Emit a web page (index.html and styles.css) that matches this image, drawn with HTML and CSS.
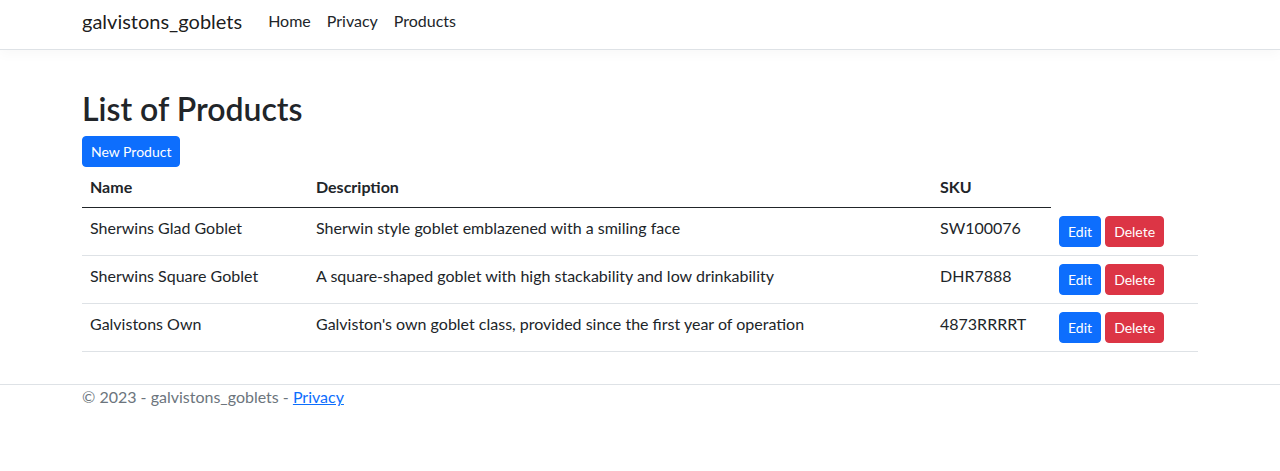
FILE: index.html
```html
<!DOCTYPE html>
<html lang="en">
<head>
<meta charset="utf-8">
<title>List of Products - galvistons_goblets</title>
<link rel="stylesheet" href="styles.css">
</head>
<body>
<header class="navbar">
  <div class="container nav-inner">
    <a class="brand" href="#">galvistons_goblets</a>
    <nav class="nav-links">
      <a class="nav-link" href="#">Home</a>
      <a class="nav-link" href="#">Privacy</a>
      <a class="nav-link" href="#">Products</a>
    </nav>
  </div>
</header>
<main class="container main">
  <h1 class="title">List of Products</h1>
  <div class="actions-top"><a class="btn btn-primary" href="#">New Product</a></div>
  <table class="table">
    <colgroup>
      <col class="c-name"><col class="c-desc"><col class="c-sku"><col class="c-act">
    </colgroup>
    <thead>
      <tr><th>Name</th><th>Description</th><th>SKU</th></tr>
    </thead>
    <tbody>
      <tr>
        <td>Sherwins Glad Goblet</td>
        <td>Sherwin style goblet emblazened with a smiling face</td>
        <td>SW100076</td>
        <td><a class="btn btn-primary" href="#">Edit</a> <a class="btn btn-danger" href="#">Delete</a></td>
      </tr>
      <tr>
        <td>Sherwins Square Goblet</td>
        <td>A square-shaped goblet with high stackability and low drinkability</td>
        <td>DHR7888</td>
        <td><a class="btn btn-primary" href="#">Edit</a> <a class="btn btn-danger" href="#">Delete</a></td>
      </tr>
      <tr>
        <td>Galvistons Own</td>
        <td>Galviston's own goblet class, provided since the first year of operation</td>
        <td>4873RRRRT</td>
        <td><a class="btn btn-primary" href="#">Edit</a> <a class="btn btn-danger" href="#">Delete</a></td>
      </tr>
    </tbody>
  </table>
</main>
<footer class="footer">
  <div class="container">&copy; 2023 - galvistons_goblets - <a href="#" class="footer-link">Privacy</a></div>
</footer>
</body>
</html>
```
FILE: styles.css
```css
* { box-sizing: border-box; }
html, body { margin: 0; padding: 0; }
body {
  font-family: "Lato", "Noto Sans", sans-serif;
  font-size: 16px;
  line-height: 1.5;
  color: #212529;
  background: #fff;
}
.container {
  max-width: 1140px;
  margin: 0 auto;
  padding: 0 12px;
}
.navbar {
  height: 50px;
  border-bottom: 1px solid #dee2e6;
  box-shadow: 0 4px 12px rgba(0,0,0,0.03);
}
.nav-inner {
  display: flex;
  align-items: center;
  height: 49px;
  padding-top: 0;
  padding-bottom: 7px;
}
.brand {
  font-size: 20px;
  line-height: 30px;
  color: rgba(0,0,0,0.9);
  text-decoration: none;
  margin-right: 18px;
}
.nav-links { display: flex; }
.nav-link {
  padding: 0 8px;
  color: #212529;
  text-decoration: none;
  line-height: 24px;
}
.main {
  padding-top: 40px;
  padding-bottom: 16px;
}
.title {
  font-size: 32px;
  font-weight: 600;
  line-height: 1.2;
  margin: 0 0 8px 0;
}
.btn {
  display: inline-block;
  font-size: 14px;
  line-height: 21px;
  padding: 4px 8px;
  border: 1px solid transparent;
  border-radius: 4px;
  color: #fff;
  text-decoration: none;
  vertical-align: middle;
}
.btn-primary { background: #0d6efd; border-color: #0d6efd; }
.btn-danger { background: #dc3545; border-color: #dc3545; }
.table {
  width: 100%;
  border-collapse: collapse;
  table-layout: fixed;
  margin-bottom: 16px;
}
.c-name { width: 226px; }
.c-desc { width: 624px; }
.c-sku { width: 119px; }
.c-act { width: 147px; }
.table th {
  text-align: left;
  font-weight: 700;
  padding: 8px;
  border-bottom: 1px solid #212529;
}
.table td {
  padding: 8px;
  vertical-align: top;
  border-bottom: 1px solid #dee2e6;
}
.footer {
  border-top: 1px solid #dee2e6;
  color: #6c757d;
  line-height: 24px;
}
.footer-link { color: #0d6efd; }
```
